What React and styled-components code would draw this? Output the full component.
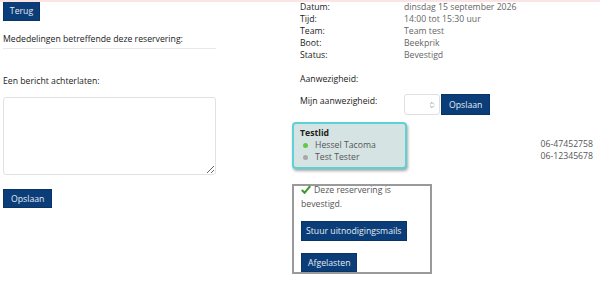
import React from "react";
import styled, { createGlobalStyle } from "styled-components";
import { ChevronsUpDown } from "lucide-react";

const Global = createGlobalStyle`
  body {
    margin: 0;
    border-top: 2px solid #fbe4e4;
    font-family: "Open Sans", "Liberation Sans", sans-serif;
    font-size: 8.7px;
    color: #222;
    background: #fff;
  }
`;

const Page = styled.div`
  display: flex;
  padding: 0 7px 0 3px;
`;

const Left = styled.div`
  width: 213px;
  flex-shrink: 0;
  display: flex;
  flex-direction: column;
  align-items: flex-start;
`;

const Right = styled.div`
  flex: 1;
  margin-left: 76px;
  display: flex;
  flex-direction: column;
`;

const Button = styled.button`
  background: #0b3e78;
  color: #e4ebf3;
  border: 1px solid #083566;
  font-family: inherit;
  font-size: 8.7px;
  white-space: nowrap;
  height: ${(p) => p.$h || 20}px;
  padding: 0 ${(p) => p.$px || 7}px;
  margin: 0;
  border-radius: 0;
  cursor: pointer;
`;

const BackButton = styled(Button)`
  margin-top: -2px;
  height: 21px;
  width: 37px;
  padding: 0;
`;

const Heading = styled.div`
  width: 100%;
  margin-top: ${(p) => p.$mt}px;
  line-height: 12px;
  padding-bottom: ${(p) => (p.$rule ? 3 : 0)}px;
  border-bottom: ${(p) => (p.$rule ? "1px solid #e8e8e8" : "none")};
`;

const Area = styled.textarea`
  width: 213px;
  height: 78px;
  box-sizing: border-box;
  margin: 10px 0 0;
  border: 1px solid #e2e2e2;
  border-radius: 3px;
  font-family: inherit;
  display: block;
`;

const SaveButton = styled(Button)`
  margin-top: 14px;
`;

const Info = styled.dl`
  display: grid;
  grid-template-columns: 104px 1fr;
  margin: -1px 0 0;
  padding-left: 8px;
  line-height: 12px;
  dt { margin: 0; color: #222; }
  dd { margin: 0; color: #666; }
`;

const Label = styled.div`
  padding-left: 8px;
  line-height: 12px;
  margin-top: ${(p) => p.$mt}px;
`;

const AttendRow = styled.div`
  display: flex;
  align-items: flex-start;
  margin-top: 9px;
  padding-left: 8px;
  line-height: 12px;
  span { width: 104px; padding-top: 1px; }
`;

const Select = styled.div`
  width: 36px;
  height: 21px;
  box-sizing: border-box;
  border: 1px solid #e0e0e0;
  border-radius: 3px;
  display: flex;
  align-items: center;
  justify-content: flex-end;
  padding-right: 3px;
  color: #777;
  margin-right: 1px;
`;

const MemberRow = styled.div`
  display: flex;
  margin-top: 7px;
`;

const Group = styled.div`
  width: 115px;
  box-sizing: border-box;
  border: 2px solid #5cd2d6;
  border-radius: 4px;
  background: #d6e3e3;
  box-shadow: 1px 2px 3px rgba(0, 0, 0, 0.35);
  padding: 3px 6px 4px;
  line-height: 12px;
`;

const GroupTitle = styled.div`
  font-weight: 700;
  color: #222;
`;

const Member = styled.div`
  display: flex;
  align-items: center;
  color: #555;
`;

const Dot = styled.span`
  width: 5px;
  height: 5px;
  border-radius: 50%;
  background: ${(p) => (p.$on ? "#62c944" : "#a6a9a9")};
  margin: 0 7px 0 3px;
`;

const Phones = styled.div`
  flex: 1;
  text-align: right;
  padding-top: 16px;
  line-height: 12px;
  color: #555;
`;

const Confirm = styled.div`
  margin-top: 15px;
  width: 140px;
  box-sizing: border-box;
  border: 2px solid #9a9a9a;
  padding: 0 7px;
  line-height: 14px;
  color: #555;
`;

const Message = styled.div`
  margin-top: -3px;
`;

const CheckIcon = styled.svg`
  width: 10px;
  height: 9px;
  margin-right: 3px;
  vertical-align: -1px;
`;

const Stack = styled.div`
  display: flex;
  flex-direction: column;
  align-items: flex-start;
  gap: 12px;
  margin-top: 10px;
`;

export default function App() {
  return (
    <>
      <Global />
      <Page>
        <Left>
          <BackButton>Terug</BackButton>
          <Heading $mt={12} $rule>
            Mededelingen betreffende deze reservering:
          </Heading>
          <Heading $mt={26}>Een bericht achterlaten:</Heading>
          <Area />
          <SaveButton $h={19} $px={7}>Opslaan</SaveButton>
        </Left>
        <Right>
          <Info>
            <dt>Datum:</dt>
            <dd>dinsdag 15 september 2026</dd>
            <dt>Tijd:</dt>
            <dd>14:00 tot 15:30 uur</dd>
            <dt>Team:</dt>
            <dd>Team test</dd>
            <dt>Boot:</dt>
            <dd>Beekprik</dd>
            <dt>Status:</dt>
            <dd>Bevestigd</dd>
          </Info>
          <Label $mt={12}>Aanwezigheid:</Label>
          <AttendRow>
            <span>Mijn aanwezigheid:</span>
            <Select>
              <ChevronsUpDown size={8} strokeWidth={2} />
            </Select>
            <Button $h={21} $px={7}>Opslaan</Button>
          </AttendRow>
          <MemberRow>
            <Group>
              <GroupTitle>Testlid</GroupTitle>
              <Member>
                <Dot $on />
                Hessel Tacoma
              </Member>
              <Member>
                <Dot />
                Test Tester
              </Member>
            </Group>
            <Phones>
              <div>06-47452758</div>
              <div>06-12345678</div>
            </Phones>
          </MemberRow>
          <Confirm>
            <Message>
              <CheckIcon viewBox="0 0 10 9">
                <path d="M0.8 5 L3.6 7.8 L9.2 1" fill="none" stroke="#3a9b2b" strokeWidth="2" />
              </CheckIcon>
              Deze reservering is bevestigd.
            </Message>
            <Stack>
              <Button $h={20} $px={4}>Stuur uitnodigingsmails</Button>
              <Button $h={19} $px={6}>Afgelasten</Button>
            </Stack>
          </Confirm>
        </Right>
      </Page>
    </>
  );
}
